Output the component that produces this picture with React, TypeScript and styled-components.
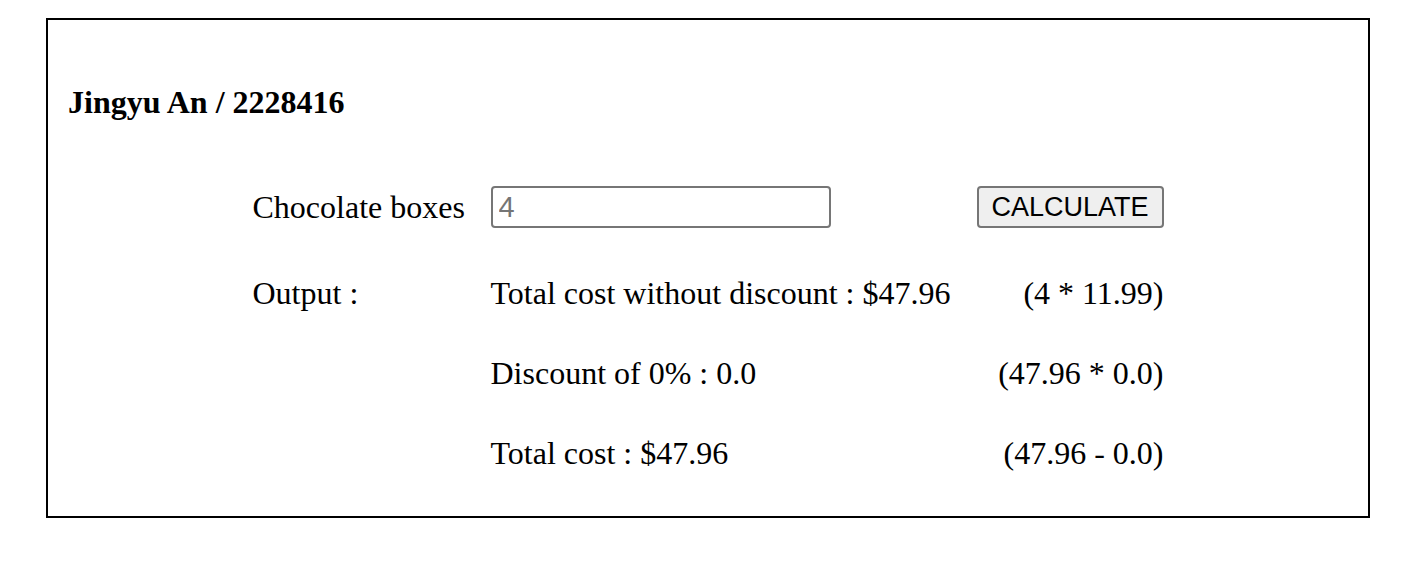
import React from 'react';
import { styled, createGlobalStyle } from 'styled-components';

const GlobalStyle = createGlobalStyle`
  html, body {
    margin: 0;
    padding: 0;
    background: #ffffff;
  }
  body {
    font-family: 'Liberation Serif', 'Times New Roman', serif;
    color: #000000;
  }
`;

const rows = [
  { text: 'Total cost without discount : $47.96', formula: '(4 * 11.99)' },
  { text: 'Discount of 0% : 0.0', formula: '(47.96 * 0.0)' },
  { text: 'Total cost : $47.96', formula: '(47.96 - 0.0)' },
];

export default function App() {
  return (
    <Page>
      <GlobalStyle />
      <Panel>
        <Title>{'Jingyu An / 2228416'}</Title>
        <Form>
          <Cell $top>{'Chocolate boxes'}</Cell>
          <Cell $top>
            <BoxInput type="number" placeholder="4" />
          </Cell>
          <Cell $top $right>
            <CalcButton type="button">{'CALCULATE'}</CalcButton>
          </Cell>
          {rows.map((row, i) => (
            <React.Fragment key={row.text}>
              <Cell>{i === 0 ? 'Output :' : ''}</Cell>
              <Cell>{row.text}</Cell>
              <Cell $right>{row.formula}</Cell>
            </React.Fragment>
          ))}
        </Form>
      </Panel>
    </Page>
  );
}

const Page = styled.div`
  padding: 18px 0 0 46px;
`;

const Panel = styled.div`
  width: 1324px;
  height: 500px;
  box-sizing: border-box;
  border: 2px solid #000000;
  padding: 0 20px;
`;

const Title = styled.h2`
  margin: 0;
  padding-top: 64px;
  font-size: 32px;
  line-height: 36px;
  font-weight: bold;
`;

const Form = styled.div`
  display: grid;
  grid-template-columns: 238px 486px 187px;
  grid-template-rows: 67px 80px 80px 80px;
  align-items: center;
  justify-content: center;
  margin-top: 66px;
  font-size: 32px;
`;

const Cell = styled.div<{ $top?: boolean; $right?: boolean }>`
  display: flex;
  align-items: center;
  justify-content: ${(p) => (p.$right ? 'flex-end' : 'flex-start')};
  align-self: ${(p) => (p.$top ? 'start' : 'center')};
  height: ${(p) => (p.$top ? '42px' : 'auto')};
  white-space: nowrap;
`;

const BoxInput = styled.input`
  width: 340px;
  height: 42px;
  box-sizing: border-box;
  border: 2px solid #767676;
  border-radius: 4px;
  padding: 0 6px;
  font-family: 'Liberation Sans', Arial, sans-serif;
  font-size: 29px;
  outline: none;

  &::placeholder {
    color: #757575;
  }
`;

const CalcButton = styled.button`
  width: 187px;
  height: 42px;
  box-sizing: border-box;
  border: 2px solid #767676;
  border-radius: 4px;
  background: #efefef;
  font-family: 'Liberation Sans', Arial, sans-serif;
  font-size: 27px;
  color: #000000;
  padding: 0;
`;
